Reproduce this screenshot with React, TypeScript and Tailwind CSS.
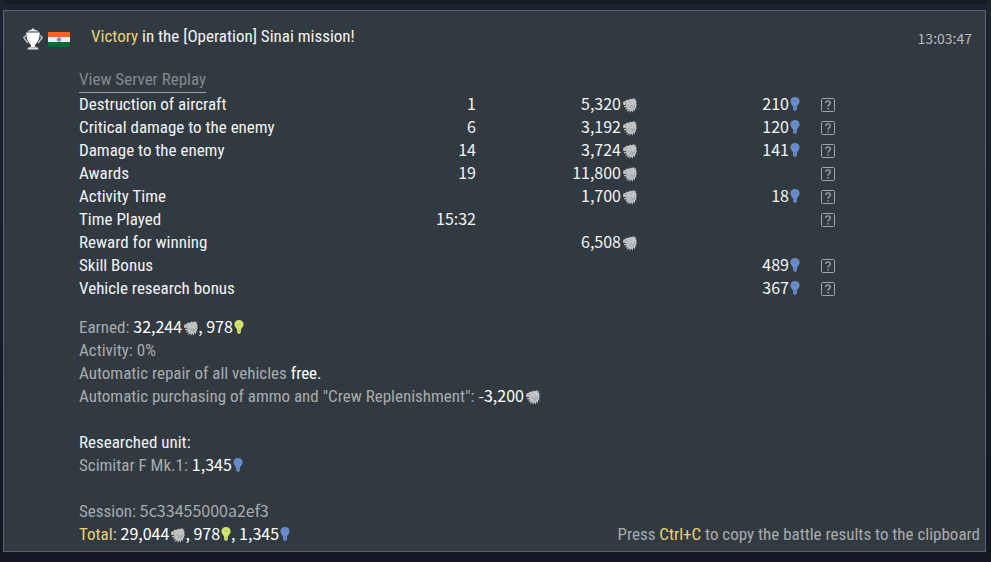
import React from 'react';

interface RewardRow {
  name: string;
  count?: string;
  silver?: string;
  research?: string;
  hint?: boolean;
}

const rewardRows: RewardRow[] = [
  { name: 'Destruction of aircraft', count: '1', silver: '5,320', research: '210', hint: true },
  { name: 'Critical damage to the enemy', count: '6', silver: '3,192', research: '120', hint: true },
  { name: 'Damage to the enemy', count: '14', silver: '3,724', research: '141', hint: true },
  { name: 'Awards', count: '19', silver: '11,800', hint: true },
  { name: 'Activity Time', silver: '1,700', research: '18', hint: true },
  { name: 'Time Played', count: '15:32', hint: true },
  { name: 'Reward for winning', silver: '6,508' },
  { name: 'Skill Bonus', research: '489', hint: true },
  { name: 'Vehicle research bonus', research: '367', hint: true },
];

function TrophyIcon() {
  return (
    <svg width="20" height="22" viewBox="0 0 20 22" aria-hidden="true">
      <path d="M4 3.600Q6.500 1.800 8.600 1.400L10 0l1.400 1.400q2.100.4 4.600 2.200z" fill="#e9eaea" />
      <path d="M3.200 4.500h13.600c0 5.500-1.800 9.500-4.300 12-.9.900-.9 1.600.1 2.500H7.400c1-.9 1-1.600.1-2.500C5 14 3.200 10 3.200 4.500z" fill="#fff" />
      <path d="M5.600 19.300h8.800l1.400 2.300H4.200z" fill="#dfe1e2" />
      <path d="M2.900 7.500L.8 9.500l4 5.500M17.100 7.500l2.100 2-4 5.500" fill="none" stroke="#b9bfc1" strokeWidth="1.500" />
      <path d="M5.500 5.500c.2 4 1.200 7 3 9.500" fill="none" stroke="#d5d8d9" strokeWidth=".6" />
    </svg>
  );
}

function IndiaFlag() {
  return (
    <svg width="22" height="15" viewBox="0 0 22 15" role="img" aria-label="India">
      <path d="M0 0h22v5H0z" fill="#f56425" />
      <path d="M0 5h22v5H0z" fill="#eeeef0" />
      <path d="M0 10h22v5H0z" fill="#056a34" />
      <circle cx="11" cy="7.500" r="1.900" fill="#a9acc9" stroke="#7c81b0" strokeWidth=".7" />
      <circle cx="11" cy="7.500" r=".7" fill="#414b92" />
    </svg>
  );
}

function LionIcon() {
  return (
    <svg className="inline-block align-[-3px] ml-0.5" width="14" height="15" viewBox="0 0 14 15" aria-hidden="true">
      <path
        d="M0 5.500L.5 3.600 2.500 3 3.800 1.600 5.500 1.900 7.500.5l.8.700L11.500 0l-.3 1.300L13.500 1.600 12.500 2.800 14 4.500 13 5 14 8 12.800 7.500 13.500 11 12 9.800 12 13.500 10.500 11.500 9.500 14.800 8.500 12.500 6.500 15 6.800 12.300 3.500 14 5 11.300 2 11.500 4 9.600 1.200 9.300 1 8l2.500-.4L3.200 6.700.3 7z"
        fill="#c2c4c5"
      />
      <path d="M2.200 4.700l2-.5M4.500 8.500l1.500-2M6.500 10.800L8.500 7M8.800 11.500l1-3.500M11.200 10l.1-3.500M7 3.500l1.500 1" stroke="#70787d" strokeWidth=".5" fill="none" />
    </svg>
  );
}

function BulbIcon({ color }: { color: string }) {
  return (
    <svg className="inline-block align-[-1px] ml-px" width="10" height="14" viewBox="0 0 10 14" aria-hidden="true">
      <path d="M5 0C2.300 0 .4 1.800.4 4.200c0 2 1.700 3.300 2.600 5.300v2.700l1.200 1.500h1.600L7 12.200V9.500c.9-2 2.600-3.300 2.600-5.300C9.600 1.800 7.700 0 5 0z" fill={color} />
      <path d="M3.200 3.500l1 .9.800-.5.800.5 1-.9M3.200 10.200h3.600M3.200 11.800h3.600" fill="none" stroke="#323a41" strokeOpacity=".3" strokeWidth=".6" />
    </svg>
  );
}

function HintButton({ name }: { name: string }) {
  return (
    <button type="button" aria-label={`About ${name}`} className="ml-auto block text-[#a3a6a8]">
      <svg width="15" height="15" viewBox="0 0 15 15" fill="none" stroke="currentColor" aria-hidden="true">
        <rect x=".5" y="1.500" width="13" height="13" rx="1" />
        <path d="M4.700 6C4.800 4.500 5.700 3.900 7 3.900s2.300.7 2.300 2c0 1.600-2.200 1.700-2.200 3.800" strokeWidth="1.300" />
        <path d="M7.100 10.900v1.500" strokeWidth="1.400" />
      </svg>
    </button>
  );
}

// Figures use a wider face than the labels around them
function Figures({ children }: { children: React.ReactNode }) {
  return (
    <span className="font-['Noto_Sans_CJK_JP',sans-serif] text-base leading-none">{children}</span>
  );
}

const Silver = () => <LionIcon />;
const Research = () => <BulbIcon color="#688dcc" />;
const FreeResearch = () => <BulbIcon color="#d2e56c" />;

export default function App() {
  return (
    <div className="flex min-h-screen flex-col bg-[#19202b] bg-linear-to-b from-[#1b2330] to-[#121722] pl-[3px] pr-[5px] pb-2.5 font-['Roboto_Condensed','Roboto',sans-serif] text-[17px] leading-[23px] text-[#a9abac]">
      <div className="mb-1.5 h-1 bg-[#141b22]" />
      <main className="flex flex-1 flex-col border border-[#56666c] bg-[#323a41] pb-[5px] pr-[5px]">
        <header className="flex items-start pl-[19px] pr-2 pt-3.5">
          <div className="flex w-17 items-center gap-[5px] pt-[3px]">
            <TrophyIcon />
            <IndiaFlag />
          </div>
          <h1 className="flex-1 text-[#f2f3f3]">
            <span className="text-[#edd073]">Victory</span> in the [Operation] Sinai mission!
          </h1>
          <time className="pt-0.5 font-['Noto_Sans_CJK_JP',sans-serif] text-sm leading-[23px] text-[#b8babb]">13:03:47</time>
        </header>

        <section className="flex flex-1 flex-col pl-[75px] pt-[18px]">
          <div className="flex">
            <a href="#replay" className="border-b border-[#9b9d9d] pb-px text-[#85898b]">
              View Server Replay
            </a>
          </div>

          <table className="w-full max-w-[757px] table-fixed text-right text-[#f2f3f3]">
            <colgroup>
              <col className="w-[300px]" />
              <col className="w-[97px]" />
              <col className="w-[161px]" />
              <col className="w-[163px]" />
              <col className="w-[36px]" />
            </colgroup>
            <tbody>
              {rewardRows.map(row => (
                <tr key={row.name} className="h-[23px]">
                  <th scope="row" className="text-left font-normal">{row.name}</th>
                  <td><Figures>{row.count}</Figures></td>
                  <td>{row.silver && <Figures>{row.silver}<Silver /></Figures>}</td>
                  <td>{row.research && <Figures>{row.research}<Research /></Figures>}</td>
                  <td>{row.hint && <HintButton name={row.name} />}</td>
                </tr>
              ))}
            </tbody>
          </table>

          <div className="pt-4">
            <p>Earned: <span className="text-white"><Figures>32,244<Silver />, 978<FreeResearch /></Figures></span></p>
            <p>Activity: 0%</p>
            <p>Automatic repair of all vehicles <span className="text-white">free.</span></p>
            <p>
              Automatic purchasing of ammo and "Crew Replenishment": <span className="text-white"><Figures>-3,200<Silver /></Figures></span>
            </p>
          </div>

          <div className="pt-[23px]">
            <h2 className="text-[#f2f3f3]">Researched unit:</h2>
            <p>Scimitar F Mk.1: <span className="text-white"><Figures>1,345<Research /></Figures></span></p>
          </div>

          <footer className="mt-auto pt-[23px]">
            <p>Session: <Figures>5c33455000a2ef3</Figures></p>
            <div className="flex justify-between">
              <p className="text-white">
                <span className="text-[#edd073]">Total:</span> <Figures>29,044<Silver />, 978<FreeResearch />, 1,345<Research /></Figures>
              </p>
              <p>
                Press <kbd className="font-[inherit] text-[17px] text-[#edd073]">Ctrl+C</kbd> to copy the battle results to the clipboard
              </p>
            </div>
          </footer>
        </section>
      </main>
    </div>
  );
}
